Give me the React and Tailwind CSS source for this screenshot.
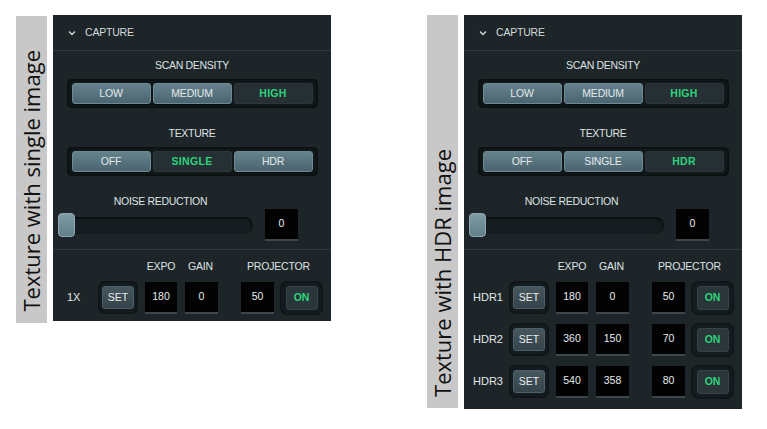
import React from "react";

const font = { fontFamily: '"Liberation Sans", Arial, sans-serif' };

const Segmented = ({ items, active }) => (
  <div className="mx-auto flex h-[29px] w-[251px] gap-[2px] rounded-[5px] bg-[#131a1c] px-[5px] py-[4px] shadow-[inset_0_0_4px_rgba(0,0,0,0.9)]">
    {items.map((it) =>
      it === active ? (
        <div key={it} className="flex flex-1 items-center justify-center rounded-[3px] border border-[#2c373b] bg-[#263034] text-[10.5px] font-bold tracking-[0.3px] text-[#2ed27c]">
          {it}
        </div>
      ) : (
        <div key={it} className="flex flex-1 items-center justify-center rounded-[3px] border border-[#6d8a94] bg-gradient-to-b from-[#64828c] to-[#4b6570] text-[10.5px] tracking-[-0.2px] text-[#e2e9eb] shadow-[0_1px_1px_rgba(0,0,0,0.6)]">
          {it}
        </div>
      )
    )}
  </div>
);

const Label = ({ children, className = "" }) => (
  <div className={"h-[14px] text-center text-[10.5px] leading-[14px] tracking-[-0.3px] text-[#dde3e5] " + className}>{children}</div>
);

const Box = ({ v, w = "w-[32px]" }) => (
  <div className={"flex h-[32px] items-center justify-center border-b-2 border-[#3d484c] bg-[#030303] text-[10.5px] text-[#e6ecee] " + w}>
    {v}
  </div>
);

const Row = ({ name, expo, gain, proj, pad }) => (
  <div className="flex h-[33px] items-center">
    <div className={"w-[45px] text-[11px] text-[#e2e8ea] " + pad}>{name}</div>
    <div className="flex h-[33px] w-[40px] items-center justify-center rounded-[7px] bg-[#151c1f] shadow-[inset_0_0_3px_rgba(0,0,0,0.8)]">
      <div className="flex h-[23px] w-[32px] items-center justify-center rounded-[3px] border border-[#4e6067] bg-gradient-to-b from-[#46575d] to-[#35434a] text-[10.5px] text-[#e6ecee]">
        SET
      </div>
    </div>
    <div className="ml-[7px]"><Box v={expo} /></div>
    <div className="ml-[8px]"><Box v={gain} w="w-[33px]" /></div>
    <div className="ml-[23px]"><Box v={proj} w="w-[33px]" /></div>
    <div className="ml-[6px] flex h-[34px] w-[43px] items-center justify-center rounded-[8px] bg-[#151c1f] shadow-[inset_0_0_3px_rgba(0,0,0,0.8)]">
      <div className="flex h-[24px] w-[32px] items-center justify-center rounded-[3px] border border-[#364348] bg-[#2a363a] text-[10.5px] font-bold text-[#2ed27c]">
        ON
      </div>
    </div>
  </div>
);

const Panel = ({ texture, rows, pad, h }) => (
  <div className={"flex w-[278px] flex-col bg-[#1d2528] " + h} style={font}>
    <div className="flex h-[36px] items-center border-b border-[#2f3a3e] pl-[15px]">
      <svg width="8" height="6" viewBox="0 0 8 6" className="mr-[9px]">
        <polyline points="1,1.5 4,4.5 7,1.5" fill="none" stroke="#cfd6d8" strokeWidth="1.4" />
      </svg>
      <span className="text-[10.5px] tracking-[-0.2px] text-[#d3d9db]">CAPTURE</span>
    </div>
    <Label className="mt-[7px]">SCAN DENSITY</Label>
    <div className="mt-[7px]">
      <Segmented items={["LOW", "MEDIUM", "HIGH"]} active="HIGH" />
    </div>
    <Label className="mt-[18px]">TEXTURE</Label>
    <div className="mt-[7px]">
      <Segmented items={["OFF", "SINGLE", "HDR"]} active={texture} />
    </div>
    <Label className="ml-[10px] mt-[18px] w-[195px]">NOISE REDUCTION</Label>
    <div className="mt-[1px] flex h-[32px] items-center pl-[5px]">
      <div className="flex h-[17px] w-[195px] items-center rounded-full bg-[#161d20] shadow-[inset_0_1px_3px_rgba(0,0,0,0.9)]">
        <div className="h-[24px] w-[17px] rounded-[4px] border border-[#8fa9b2] bg-gradient-to-b from-[#7f9ba5] to-[#62808a]" />
      </div>
      <div className="ml-[12px]"><Box v="0" w="w-[33px]" /></div>
    </div>
    <div className="mt-[8px] border-t border-[#2f3a3e]" />
    <div className="mt-[9px] flex h-[14px] text-[10.5px] leading-[14px] tracking-[-0.2px] text-[#dde3e5]">
      <div className="ml-[92px] w-[32px] text-center">EXPO</div>
      <div className="ml-[7px] w-[33px] text-center">GAIN</div>
      <div className="ml-[30px]">PROJECTOR</div>
    </div>
    <div className="mt-[8px] flex flex-col gap-[9px]">
      {rows.map((r) => (
        <Row key={r[0]} name={r[0]} expo={r[1]} gain={r[2]} proj={r[3]} pad={pad} />
      ))}
    </div>
  </div>
);

const Side = ({ text, h }) => (
  <div className={"flex w-[31px] flex-col items-center justify-end bg-[#c8c8c8] pb-[11px] " + h}>
    <span
      className="rotate-180 text-[22px] leading-[31px] text-[#111] [writing-mode:vertical-rl]"
      style={{ fontFamily: '"Open Sans", "Noto Sans", sans-serif' }}
    >
      {text}
    </span>
  </div>
);

export default function App() {
  return (
    <div className="flex h-[429px] w-[767px] items-start gap-[96px] bg-white pl-[16px] pt-[15px]">
      <div className="flex items-start gap-[6px]">
        <div className="mt-[1px]"><Side text="Texture with single image" h="h-[307px]" /></div>
        <Panel texture="SINGLE" rows={[["1X", "180", "0", "50"]]} pad="pl-[14px]" h="h-[306px]" />
      </div>
      <div className="flex items-start gap-[6px]">
        <Side text="Texture with HDR image" h="h-[393px]" />
        <Panel
          texture="HDR"
          pad="pl-[9px]"
          h="h-[394px]"
          rows={[
            ["HDR1", "180", "0", "50"],
            ["HDR2", "360", "150", "70"],
            ["HDR3", "540", "358", "80"],
          ]}
        />
      </div>
    </div>
  );
}
